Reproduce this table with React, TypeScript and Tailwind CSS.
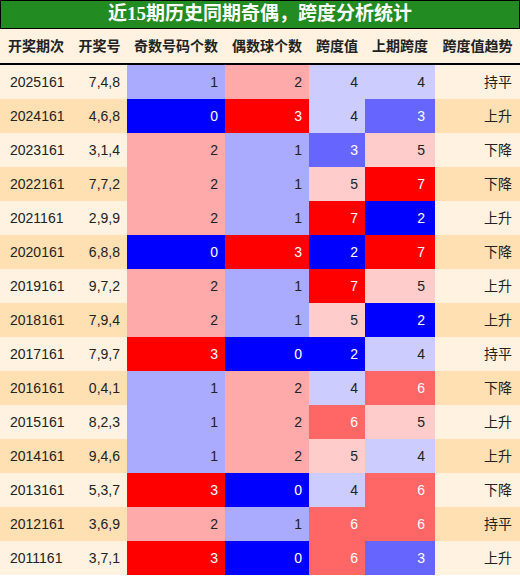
import React from 'react';

type Row = [string, string, number, number, number, number, string];

const rows: Row[] = [
  ['2025161', '7,4,8', 1, 2, 4, 4, '持平'],
  ['2024161', '4,6,8', 0, 3, 4, 3, '上升'],
  ['2023161', '3,1,4', 2, 1, 3, 5, '下降'],
  ['2022161', '7,7,2', 2, 1, 5, 7, '下降'],
  ['2021161', '2,9,9', 2, 1, 7, 2, '上升'],
  ['2020161', '6,8,8', 0, 3, 2, 7, '下降'],
  ['2019161', '9,7,2', 2, 1, 7, 5, '上升'],
  ['2018161', '7,9,4', 2, 1, 5, 2, '上升'],
  ['2017161', '7,9,7', 3, 0, 2, 4, '持平'],
  ['2016161', '0,4,1', 1, 2, 4, 6, '下降'],
  ['2015161', '8,2,3', 1, 2, 6, 5, '上升'],
  ['2014161', '9,4,6', 1, 2, 5, 4, '上升'],
  ['2013161', '5,3,7', 3, 0, 4, 6, '下降'],
  ['2012161', '3,6,9', 2, 1, 6, 6, '持平'],
  ['2011161', '3,7,1', 3, 0, 6, 3, '上升'],
];

// count columns: 0..3
const countCls = ['bg-[#0000ff] text-white', 'bg-[#aaaaff] text-[#222]', 'bg-[#ffaaaa] text-[#222]', 'bg-[#ff0000] text-white'];

// span columns: 2..7
const spanCls: Record<number, string> = {
  2: 'bg-[#0000ff] text-white',
  3: 'bg-[#6666ff] text-white',
  4: 'bg-[#ccccff] text-[#222]',
  5: 'bg-[#ffcccc] text-[#222]',
  6: 'bg-[#ff6666] text-white',
  7: 'bg-[#ff0000] text-white',
};

const headers = ['开奖期次', '开奖号', '奇数号码个数', '偶数球个数', '跨度值', '上期跨度', '跨度值趋势'];

export default function App() {
  return (
    <div
      className="w-[520px] h-[576px] overflow-hidden bg-white"
      style={{ fontFamily: '"Liberation Sans", "Noto Sans CJK SC", sans-serif' }}
    >
      <div
        className="h-[29px] bg-[#228b22] border border-black flex items-center justify-center text-white font-bold text-[19px]"
        style={{ fontFamily: '"Liberation Serif", "Noto Sans CJK SC", serif' }}
      >
        近15期历史同期奇偶，跨度分析统计
      </div>
      <div className="grid grid-cols-[72px_55px_98px_84px_56px_70px_85px] h-[36px] bg-[#fff2e0] border-b-2 border-black text-[14px] font-bold text-[#222]">
        {headers.map((h) => (
          <div key={h} className="flex items-center justify-center whitespace-nowrap">
            {h}
          </div>
        ))}
      </div>
      {rows.map((r, i) => {
        const bg = i % 2 === 0 ? 'bg-[#fff2e0]' : 'bg-[#ffe0b2]';
        return (
          <div key={r[0]} className={`grid grid-cols-[72px_55px_98px_84px_56px_70px_85px] h-[34px] text-[14px] text-[#222] ${bg}`}>
            <div className="flex items-center pl-[10px]">{r[0]}</div>
            <div className="flex items-center justify-end pr-[7px]">{r[1]}</div>
            <div className={`flex items-center justify-end pr-[7px] ${countCls[r[2]]}`}>{r[2]}</div>
            <div className={`flex items-center justify-end pr-[7px] ${countCls[r[3]]}`}>{r[3]}</div>
            <div className={`flex items-center justify-end pr-[7px] ${spanCls[r[4]]}`}>{r[4]}</div>
            <div className={`flex items-center justify-end pr-[10px] ${spanCls[r[5]]}`}>{r[5]}</div>
            <div className="flex items-center justify-end pr-[8px]">{r[6]}</div>
          </div>
        );
      })}
    </div>
  );
}
